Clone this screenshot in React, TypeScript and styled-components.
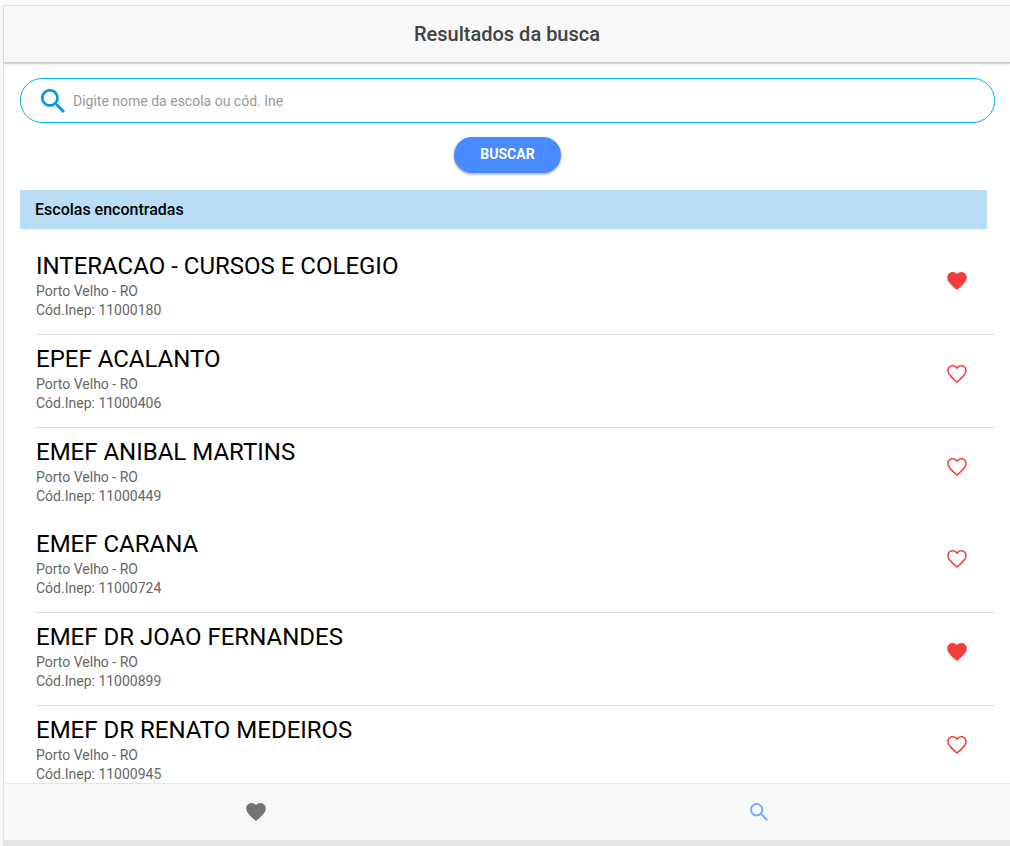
import React, { useState } from "react";
import styled, { createGlobalStyle } from "styled-components";
import { IoMdHeart, IoMdHeartEmpty, IoMdSearch } from "react-icons/io";

const GlobalStyle = createGlobalStyle`
  *, *::before, *::after { box-sizing: border-box; }
  body {
    margin: 0;
    background: #fbfbfb;
    font-family: Roboto, "Liberation Sans", sans-serif;
    color: #000;
  }
  h1, h2, h3, p, ul { margin: 0; padding: 0; }
  button, input { font-family: inherit; }
`;

const Page = styled.div`
  height: 100vh;
  display: flex;
  flex-direction: column;
  padding: 5px 0 0 3px;
`;

const Frame = styled.div`
  flex: 1;
  min-height: 0;
  display: flex;
  flex-direction: column;
  border-top: 1px solid #e2e2e2;
  border-left: 1px solid #e2e2e2;
  background: #fff;
  box-shadow: 0 0 8px rgba(0, 0, 0, 0.04);
`;

const Header = styled.header`
  display: flex;
  flex: none;
  align-items: center;
  justify-content: center;
  height: 56px;
  background: #f8f8f8;
  box-shadow: 0 1px 0 #cccccc, 0 2px 1px rgba(0, 0, 0, 0.12), 0 3px 3px rgba(0, 0, 0, 0.06);
`;

const Title = styled.h1`
  font-size: 20px;
  line-height: 24px;
  font-weight: 500;
  color: #424242;
`;

const Content = styled.main`
  flex: 1;
  min-height: 0;
  overflow: hidden;
  padding: 16px 15px 0 16px;
`;

const SearchForm = styled.form`
  display: flex;
  flex-direction: column;
  align-items: center;
  gap: 14px;
`;

const SearchBox = styled.label`
  display: flex;
  align-items: center;
  gap: 4px;
  width: 100%;
  height: 45px;
  padding: 0 16px;
  border: 1px solid #00b4f5;
  border-radius: 22px;
  color: #039be0;
`;

const SearchInput = styled.input`
  flex: 1;
  min-width: 0;
  padding: 0;
  border: 0;
  outline: 0;
  background: transparent;
  font-size: 14px;
  line-height: 20px;
  color: #000;
  &::placeholder { color: #999; opacity: 1; }
`;

const SubmitButton = styled.button`
  height: 36px;
  padding: 0 26px 2px;
  border: 0;
  border-radius: 18px;
  background: #488aff;
  color: #fff;
  font-size: 14px;
  font-weight: 700;
  text-transform: uppercase;
  box-shadow: 0 2px 2px rgba(0, 0, 0, 0.14), 0 1px 3px rgba(0, 0, 0, 0.24);
  cursor: pointer;
`;

const SectionTitle = styled.h2`
  margin: 17px 8px 13px 0;
  padding: 0 15px;
  background: #b8ddf5;
  font-size: 16px;
  line-height: 39px;
  font-weight: 500;
`;

const SchoolList = styled.ul`
  list-style: none;
  padding-left: 16px;
`;

const SchoolItem = styled.li<{ $divided: boolean }>`
  display: flex;
  align-items: center;
  justify-content: space-between;
  padding: 10px 26px 14px 0;
  border-bottom: ${(p) => (p.$divided ? "1px solid #dedede" : "0")};
`;

const SchoolName = styled.h3`
  margin-bottom: 2px;
  font-size: 24px;
  line-height: 28px;
  font-weight: 400;
`;

const SchoolDetail = styled.p`
  font-size: 14px;
  line-height: 19px;
  color: #666;
`;

const FavoriteButton = styled.button`
  display: flex;
  padding: 0;
  margin-bottom: 11px;
  border: 0;
  background: transparent;
  color: #f53d3d;
  cursor: pointer;
`;

const TabBar = styled.nav`
  display: flex;
  flex: none;
  height: 57px;
  border-top: 1px solid #e6e6e6;
  background: #f8f8f8;
`;

const Tab = styled.a<{ $active?: boolean }>`
  flex: 1;
  display: flex;
  align-items: center;
  justify-content: center;
  color: ${(p) => (p.$active ? "#7cabff" : "#747474")};
`;

const BottomStrip = styled.div`
  flex: none;
  height: 6px;
  background: #e6e6e6;
`;

type School = { name: string; city: string; code: string; favorite: boolean; divided: boolean };

const initialSchools: School[] = [
  { name: "INTERACAO - CURSOS E COLEGIO", city: "Porto Velho - RO", code: "11000180", favorite: true, divided: true },
  { name: "EPEF ACALANTO", city: "Porto Velho - RO", code: "11000406", favorite: false, divided: true },
  { name: "EMEF ANIBAL MARTINS", city: "Porto Velho - RO", code: "11000449", favorite: false, divided: false },
  { name: "EMEF CARANA", city: "Porto Velho - RO", code: "11000724", favorite: false, divided: true },
  { name: "EMEF DR JOAO FERNANDES", city: "Porto Velho - RO", code: "11000899", favorite: true, divided: true },
  { name: "EMEF DR RENATO MEDEIROS", city: "Porto Velho - RO", code: "11000945", favorite: false, divided: true },
];

export default function App() {
  const [schools, setSchools] = useState(initialSchools);

  const toggleFavorite = (code: string) =>
    setSchools((list) => list.map((s) => (s.code === code ? { ...s, favorite: !s.favorite } : s)));

  return (
    <Page>
      <GlobalStyle />
      <Frame>
        <Header>
          <Title>Resultados da busca</Title>
        </Header>
        <Content>
          <SearchForm onSubmit={(e) => e.preventDefault()}>
            <SearchBox htmlFor="school-search">
              <IoMdSearch size={32} aria-hidden />
              <SearchInput
                id="school-search"
                type="text"
                aria-label="Digite nome da escola ou cód. Ine"
                placeholder="Digite nome da escola ou cód. Ine"
              />
            </SearchBox>
            <SubmitButton type="submit">Buscar</SubmitButton>
          </SearchForm>
          <SectionTitle>Escolas encontradas</SectionTitle>
          <SchoolList>
            {schools.map((s) => (
              <SchoolItem key={s.code} $divided={s.divided}>
                <div>
                  <SchoolName>{s.name}</SchoolName>
                  <SchoolDetail>{s.city}</SchoolDetail>
                  <SchoolDetail>Cód.Inep: {s.code}</SchoolDetail>
                </div>
                <FavoriteButton
                  type="button"
                  aria-label="Favorito"
                  aria-pressed={s.favorite}
                  onClick={() => toggleFavorite(s.code)}
                >
                  {s.favorite ? <IoMdHeart size={24} /> : <IoMdHeartEmpty size={24} />}
                </FavoriteButton>
              </SchoolItem>
            ))}
          </SchoolList>
        </Content>
        <TabBar>
          <Tab href="#favoritos" aria-label="Favoritos">
            <IoMdHeart size={24} />
          </Tab>
          <Tab href="#busca" aria-label="Busca" $active>
            <IoMdSearch size={24} />
          </Tab>
        </TabBar>
        <BottomStrip />
      </Frame>
    </Page>
  );
}
